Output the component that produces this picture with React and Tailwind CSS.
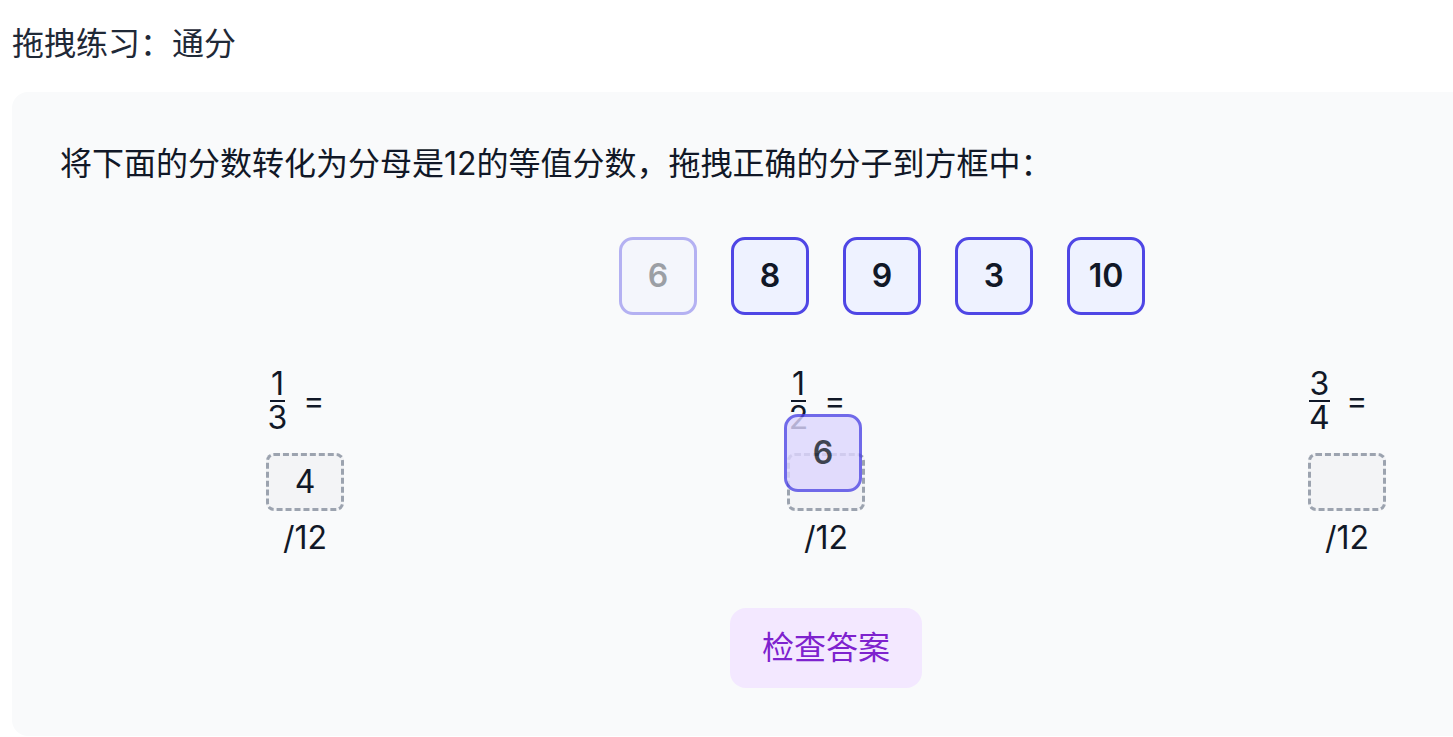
import { useState } from 'react'

const tiles = [
  { value: 6, used: true },
  { value: 8, used: false },
  { value: 9, used: false },
  { value: 3, used: false },
  { value: 10, used: false },
]

const problems = [
  { num: 1, den: 3, answer: '4', dragging: false },
  { num: 1, den: 2, answer: '', dragging: true },
  { num: 3, den: 4, answer: '', dragging: false },
]

function Tile({ value, used }) {
  return (
    <div
      className={`w-[78px] h-[78px] rounded-[14px] border-[3px] border-[#4f46e5] bg-[#eef2ff] flex items-center justify-center text-[32px] font-semibold text-[#111827] select-none ${
        used ? 'opacity-40' : ''
      }`}
    >
      {value}
    </div>
  )
}

function Problem({ num, den, answer, dragging }) {
  return (
    <div className="flex flex-col items-center">
      <div className="flex items-center pr-[18px]">
        <div className="flex flex-col items-center text-[32px] leading-none text-[#111827]">
          <span className="border-b-2 border-[#111827] px-[1px]">{num}</span>
          <span>{den}</span>
        </div>
        <span className="ml-4 text-[32px] leading-none text-[#111827]">=</span>
      </div>
      <div className="relative mt-[19px]">
        <div className="w-[78px] h-[58px] rounded-lg border-[3px] border-dashed border-[#9ca3af] bg-[#f3f4f6] flex items-center justify-center text-[32px] text-[#111827]">
          {answer}
        </div>
        {dragging && (
          <div className="absolute left-[-3px] top-[-39px] w-[78px] h-[78px] rounded-[14px] border-[3px] border-[#4f46e5] bg-[#ddd6fe] opacity-80 flex items-center justify-center text-[32px] font-semibold text-[#111827]">
            6
          </div>
        )}
      </div>
      <div className="mt-[3px] text-[32px] leading-[48px] text-[#111827]">/12</div>
    </div>
  )
}

export default function App() {
  const [checked, setChecked] = useState(false)

  return (
    <div
      className="w-screen overflow-hidden bg-white px-3 pt-5"
      style={{ fontFamily: 'Inter, "Noto Sans CJK SC", sans-serif' }}
    >
      <h2 className="text-[32px] leading-[48px] font-normal text-[#1f2937]">拖拽练习：通分</h2>

      <div className="mt-6 w-[1628px] rounded-2xl bg-[#f9fafb] p-12">
        <p className="text-[32px] leading-[48px] text-[#111827]">
          将下面的分数转化为分母是12的等值分数，拖拽正确的分子到方框中：
        </p>

        <div className="mt-[49px] flex justify-center gap-[34px] pl-[112px]">
          {tiles.map((t) => (
            <Tile key={t.value} value={t.value} used={t.used} />
          ))}
        </div>

        <div className="mt-[53px] grid grid-cols-3 gap-[31px]">
          {problems.map((p) => (
            <Problem key={p.den} {...p} />
          ))}
        </div>

        <div className="mt-[46px] flex justify-center">
          <button
            type="button"
            onClick={() => setChecked((v) => !v)}
            className="rounded-2xl bg-[#f3e8ff] px-8 py-4 text-[32px] leading-[48px] text-[#7e22ce]"
          >
            检查答案
          </button>
        </div>
        {checked && null}
      </div>
    </div>
  )
}
